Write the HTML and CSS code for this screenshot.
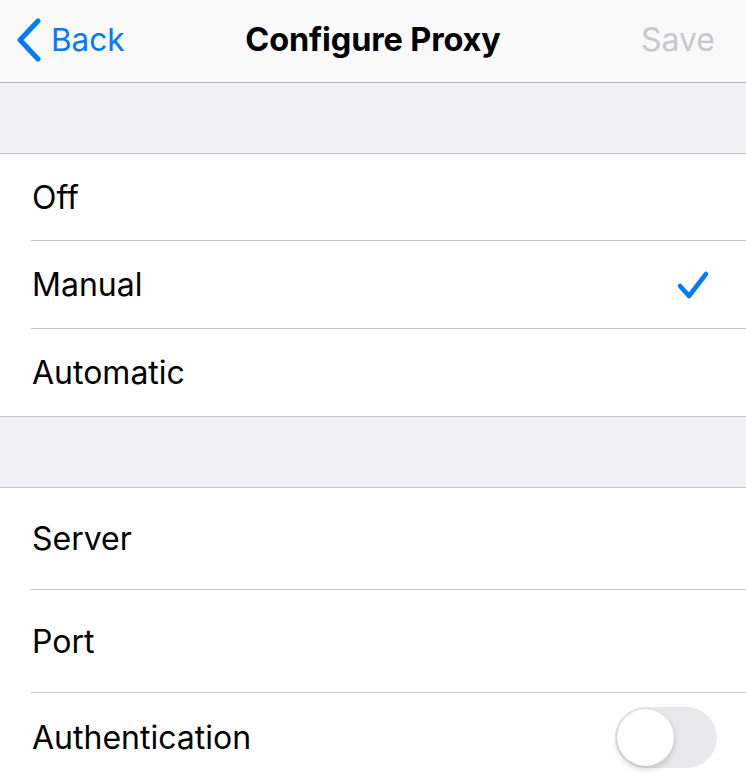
FILE: index.html
```html
<!DOCTYPE html>
<html>
<head>
<meta charset="utf-8">
<link rel="stylesheet" href="styles.css">
</head>
<body>
<div class="nav">
  <div class="nav-left">
    <svg class="chev" width="28" height="44" viewBox="0 0 28 44"><path d="M23 3 L5 22 L23 41" fill="none" stroke="#007aff" stroke-width="5" stroke-linecap="round" stroke-linejoin="round"/></svg>
    <span class="back">Back</span>
  </div>
  <div class="title">Configure Proxy</div>
  <div class="save">Save</div>
</div>
<div class="gap"></div>
<div class="group">
  <div class="row short first"><span>Off</span></div>
  <div class="row short"><span>Manual</span>
    <svg class="check" width="34" height="32" viewBox="0 0 34 32"><path d="M4 17 L13 27 L30 5" fill="none" stroke="#007aff" stroke-width="4.5" stroke-linecap="round" stroke-linejoin="round"/></svg>
  </div>
  <div class="row short last"><span>Automatic</span></div>
</div>
<div class="gap"></div>
<div class="group">
  <div class="row tall"><span>Server</span></div>
  <div class="row tall port"><span>Port</span></div>
  <div class="row tall end"><span>Authentication</span>
    <div class="toggle"><div class="knob"></div></div>
  </div>
</div>
</body>
</html>
```
FILE: styles.css
```css
html, body {
  margin: 0;
  padding: 0;
  background: #ffffff;
  font-family: "Inter", "Roboto", sans-serif;
  overflow: hidden;
}
.nav {
  height: 83px;
  box-sizing: border-box;
  padding: 0 31px 3px 15px;
  background: #f9f9fa;
  border-bottom: 1px solid #b2b2b2;
  display: flex;
  align-items: center;
  justify-content: space-between;
  position: relative;
}
.nav-left {
  display: flex;
  align-items: center;
  gap: 8px;
}
.chev { display: block; }
.back {
  color: #007aff;
  font-size: 31.5px;
}
.title {
  position: absolute;
  left: 0;
  right: 0;
  top: 0;
  bottom: 3px;
  display: flex;
  align-items: center;
  justify-content: center;
  font-weight: 700;
  font-size: 32.5px;
  color: #000;
  pointer-events: none;
  letter-spacing: -0.15px;
}
.save {
  color: #c7c7cc;
  font-size: 32px;
}
.gap {
  height: 70px;
  background: #f1f1f6;
  border-bottom: 1px solid #c8c7cc;
}
.group {
  background: #fff;
  border-bottom: 1px solid #c8c7cc;
  padding-left: 31px;
}
.row {
  display: flex;
  align-items: center;
  justify-content: space-between;
  box-sizing: border-box;
  border-bottom: 1px solid #c8c7cc;
  padding-right: 29px;
  font-size: 32px;
  color: #000;
}
.row span { padding-left: 1px; }
.row.last { border-bottom: none; }
.short { height: 88px; }
.row.short.first { height: 87px; }
.row.short.last { height: 87px; }
.tall { height: 102px; }
.row.port { height: 103px; }
.row.end { border-bottom: none; height: 88px; }
.check { display: block; margin-right: 7px; }
.toggle {
  width: 102px;
  height: 61px;
  border-radius: 31px;
  background: #e9e9eb;
  box-sizing: border-box;
  padding: 2px;
  display: flex;
  margin-right: 0;
}
.knob {
  width: 57px;
  height: 57px;
  border-radius: 50%;
  background: #fff;
  box-shadow: 0 3px 6px rgba(0,0,0,0.18), 0 0 1px rgba(0,0,0,0.15);
}
```
